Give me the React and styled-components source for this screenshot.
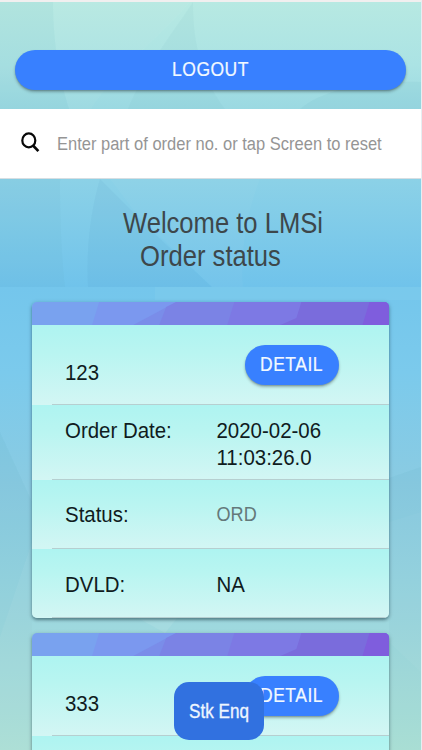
import React from "react";
import styled, { createGlobalStyle } from "styled-components";

const GlobalStyle = createGlobalStyle`
  * {
    box-sizing: border-box;
  }

  body {
    margin: 0;
    height: 750px;
    overflow: hidden;
    font-family: "Liberation Sans", Arial, sans-serif;
  }
`;

const orders = [
  {
    no: "123",
    fields: [
      { label: "Order Date:", value: "2020-02-06 11:03:26.0", height: 75, top: 11.5 },
      { label: "Status:", value: "ORD", height: 69, top: 21, muted: true },
      { label: "DVLD:", value: "NA", height: 69, top: 21.5 }
    ]
  },
  { no: "333", fields: [{ height: 75 }] }
];

const Page = styled.div`
  position: relative;
  height: 750px;
  overflow: hidden;
  border-top: 2px solid #f1efef;
  border-right: 1px solid #e6eef2;
  background: linear-gradient(
    #74c6ec 285px,
    #7bcaec 370px,
    #8acbe2 480px,
    #97d4e0 580px,
    #a5dcdc 670px,
    #b1e3d8 748px
  );
`;

const Backdrop = styled.svg`
  position: absolute;
  top: 0;
  left: 0;
  width: 421px;
  height: 748px;
`;

const Content = styled.div`
  position: relative;
`;

const Tall = styled.span`
  display: block;
  transform: scaleY(${p => p.$stretch || 1.12});
  transform-origin: top left;
`;

const Toolbar = styled.div`
  height: 107px;
  padding: 48px 15px 0 15px;
`;

const Button = styled.button`
  display: flex;
  align-items: center;
  justify-content: center;
  width: ${p => p.$width || "100%"};
  height: 39.5px;
  padding: 0 0 1px;
  border: 0;
  border-radius: 20px;
  background: #3880ff;
  color: #f2f9ff;
  font-family: inherit;
  font-size: 17.5px;
  letter-spacing: 0.5px;
  -webkit-text-stroke: 0.2px #f2f9ff;
  box-shadow: 0 2px 3px rgba(0, 0, 0, 0.28), 0 1px 1px rgba(0, 0, 0, 0.12);

  ${Tall} {
    transform-origin: center;
  }
`;

const SearchBar = styled.label`
  display: flex;
  align-items: center;
  height: 70px;
  padding-left: 20px;
  background: #fff;
  border-bottom: 1px solid #d6dee2;

  svg {
    width: 20px;
    height: 22px;
    margin-top: -3px;
  }

  input {
    width: 350px;
    margin: -1px 0 0 17px;
    padding: 0;
    border: 0;
    outline: 0;
    background: none;
    font-family: inherit;
    font-size: 16.5px;
    transform: scaleY(1.13);
  }

  input::placeholder {
    color: #959595;
    opacity: 1;
  }
`;

const Welcome = styled.h1`
  height: 123px;
  margin: 0;
  padding-top: 27.5px;
  color: #3d474b;
  font-size: 25.6px;
  font-weight: 400;
  line-height: 29.5px;
  text-align: center;

  ${Tall} span {
    display: block;
  }

  ${Tall} span:first-child {
    padding-left: 25px;
  }
`;

const Card = styled.section`
  width: 357.5px;
  height: 316px;
  margin: 0 0 15px 31.5px;
  border-radius: 5px;
  overflow: hidden;
  box-shadow: 0 2px 3px rgba(0, 30, 40, 0.38), 0 1px 5px rgba(0, 30, 40, 0.18);
`;

const CardHeader = styled.svg`
  display: block;
  width: 100%;
  height: 23px;
`;

const Row = styled.div`
  height: ${p => p.$height}px;
  padding-left: 20.5px;
  background: linear-gradient(#aef4f1, #b9f5f1 35%, #d3f6f4);
  color: #101c1e;
  font-size: 20.45px;
  line-height: 24px;
`;

const RowInner = styled.div`
  display: flex;
  height: 100%;
  padding: ${p => p.$top}px 0 0 13px;
  border-bottom: 1px solid #b6cfd0;
`;

const Label = styled.div`
  width: 151.5px;
`;

const Value = styled.div`
  width: 125px;
  color: ${p => (p.$muted ? "#64797a" : "inherit")};
  font-size: ${p => (p.$muted ? "18.1px" : "inherit")};
`;

const DetailSlot = styled.div`
  margin: -13.5px 0 0 28px;
`;

const FloatingButton = styled.button`
  position: absolute;
  left: 174px;
  top: 680px;
  width: 90px;
  height: 58px;
  padding: 2px 0 0;
  border: 0;
  border-radius: 15px;
  background: #3171e0;
  color: #eef6ff;
  font-family: inherit;
  font-size: 17.1px;
  -webkit-text-stroke: 0.3px #eef6ff;

  ${Tall} {
    transform-origin: center;
  }
`;

const BackgroundShapes = () => (
  <Backdrop viewBox="0 0 421 748" preserveAspectRatio="none">
    <defs>
      <linearGradient id="head" x1="0" y1="0" x2="0" y2="1">
        <stop offset="0" stopColor="#b7e9e2" />
        <stop offset="0.22" stopColor="#abe3e4" />
        <stop offset="0.37" stopColor="#9bd9e2" />
        <stop offset="0.63" stopColor="#8bd1e7" />
        <stop offset="1" stopColor="#70c3eb" />
      </linearGradient>
    </defs>
    <rect width="421" height="285" fill="url(#head)" />
    <path d="M0 0H53C53 45 61 80 69 107L60 180C60 220 62 260 65 285H0Z" fill="#5b9ba8" opacity="0.06" />
    <path d="M190 0C160 36 118 65 91 107H69C58 75 53 35 53 0Z" fill="#fff" opacity="0.03" />
    <path d="M193 0C193 50 205 80 225 107H128C145 65 170 35 193 0Z" fill="#4d99a9" opacity="0.06" />
    <path d="M100 177L155 232L212 285H88C86 250 90 210 100 177Z" fill="#397fa5" opacity="0.06" />
    <path d="M260 177C247 210 240 250 243 285H212L135 210L110 177Z" fill="#fff" opacity="0.03" />
    <path d="M421 80C360 78 320 90 300 107H421Z" fill="#4695ab" opacity="0.07" />
    <path d="M155 285H421V298H155Z" fill="#a5e2f2" opacity="0.12" />
    <path d="M0 430L32 500V748H0Z" fill="#4d9aae" opacity="0.07" />
    <path d="M421 465L389 476V748H421Z" fill="#4d9aae" opacity="0.07" />
    <path d="M421 510L389 520V640L421 670Z" fill="#fff" opacity="0.03" />
    <path d="M138 616H177L165 631Z" fill="#fff" opacity="0.08" />
    <path d="M0 635L32 540V748H0Z" fill="#fff" opacity="0.05" />
  </Backdrop>
);

const SearchIcon = () => (
  <svg viewBox="0 0 20 22" fill="none" stroke="#080808" strokeWidth="2.2">
    <ellipse cx="8.8" cy="9.4" rx="6.5" ry="7" />
    <path d="M13 14.5L18.4 20.2" strokeWidth="2.6" />
  </svg>
);

const HeaderArt = () => (
  <CardHeader viewBox="0 0 357 23" preserveAspectRatio="none">
    <rect width="357" height="23" fill="#79a2ef" />
    <path d="M67 0H357V23H60Z" fill="#7b98ef" />
    <path d="M144 0H357V23H101Z" fill="#7a8de9" />
    <path d="M144 0H357V23H127L134 5Z" fill="#7b83e5" />
    <path d="M202 0H357V23H195Z" fill="#7d79e4" />
    <path d="M293 0H357V23H248L264 16L269 0Z" fill="#7a6cdc" />
    <path d="M337 0H357V23H330Z" fill="#7f5ddd" />
  </CardHeader>
);

const OrderRow = ({ label, height, top = 0, children }) => (
  <Row $height={height}>
    <RowInner $top={top}>
      {label && (
        <Label>
          <Tall>{label}</Tall>
        </Label>
      )}
      {children}
    </RowInner>
  </Row>
);

const OrderCard = ({ order }) => (
  <Card>
    <HeaderArt />
    <OrderRow label={order.no} height={80} top={33.5}>
      <DetailSlot>
        <Button $width="94px">
          <Tall $stretch={1.15}>DETAIL</Tall>
        </Button>
      </DetailSlot>
    </OrderRow>
    {order.fields.map(({ label, value, height, top, muted }, i) => (
      <OrderRow key={i} label={label} height={height} top={top}>
        {value && (
          <Value $muted={muted}>
            <Tall>{value}</Tall>
          </Value>
        )}
      </OrderRow>
    ))}
  </Card>
);

const App = () => (
  <Page>
    <GlobalStyle />
    <BackgroundShapes />
    <Content>
      <Toolbar>
        <Button>
          <Tall $stretch={1.15}>LOGOUT</Tall>
        </Button>
      </Toolbar>
      <SearchBar>
        <SearchIcon />
        <input placeholder="Enter part of order no. or tap Screen to reset" />
      </SearchBar>
      <Welcome>
        <Tall>
          <span>Welcome to LMSi</span>
          <span>Order status</span>
        </Tall>
      </Welcome>
      {orders.map(order => (
        <OrderCard key={order.no} order={order} />
      ))}
    </Content>
    <FloatingButton>
      <Tall $stretch={1.18}>Stk Enq</Tall>
    </FloatingButton>
  </Page>
);

export default App;
